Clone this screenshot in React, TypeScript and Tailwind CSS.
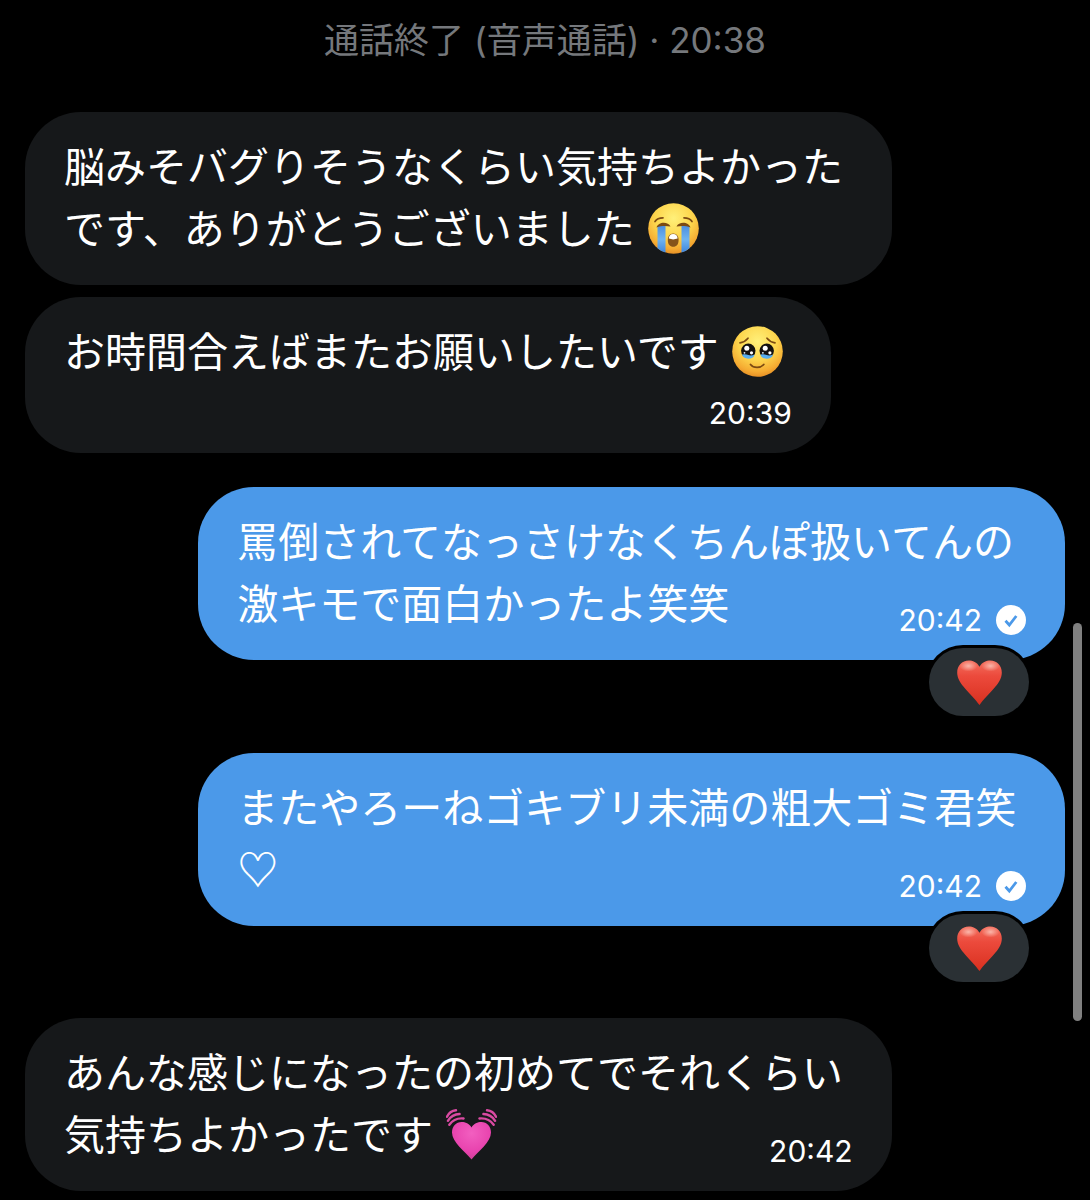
import React from 'react';
import clsx from 'clsx';

const emojiClass = "inline-block w-[51px] h-[51px] ml-[13px] mr-[9px] align-[-10px]";

const FaceDefs = ({ id }: { id: string }) => (
  <defs>
    <radialGradient id={id} cx="0.5" cy="0.3" r="0.75">
      <stop offset="0" stopColor="#fff07a" />
      <stop offset="0.5" stopColor="#fdd54c" />
      <stop offset="0.8" stopColor="#f5ab32" />
      <stop offset="1" stopColor="#e0831f" />
    </radialGradient>
    <linearGradient id={`${id}-tear`} x1="0" y1="0" x2="0" y2="1">
      <stop offset="0" stopColor="#4d8fe0" />
      <stop offset="0.5" stopColor="#6fb4f0" />
      <stop offset="1" stopColor="#3f86dd" />
    </linearGradient>
  </defs>
);

const SobbingFace = () => (
  <svg viewBox="0 0 51 51" role="img" aria-label="😭" className={emojiClass}>
    <FaceDefs id="sob" />
    <circle cx="25.5" cy="25.5" r="25.3" fill="url(#sob)" />
    <g fill="none" stroke="#7c4a12" strokeWidth="1.7" strokeLinecap="round">
      <path d="M7 18.5C8.5 16.2 11.5 14.8 15 14.8" />
      <path d="M44 18.5C42.5 16.2 39.5 14.8 36 14.8" />
    </g>
    <path d="M9.5 23V45.2Q13 48.5 17.5 49.5V23Z" fill="url(#sob-tear)" />
    <path d="M33.5 23V49.5Q38 48.5 41.5 45.2V23Z" fill="url(#sob-tear)" />
    <path d="M8.5 24.5C10 18.7 20 18 22.5 23.5C18 22.6 13 22.6 8.5 24.5Z" fill="#7c4a12" />
    <path d="M42.5 24.5C41 18.7 31 18 28.5 23.5C33 22.6 38 22.6 42.5 24.5Z" fill="#7c4a12" />
    <path d="M25.2 30.5C21.5 30.5 19.8 33.5 19.8 37C19.8 41.5 22 43.8 25.2 43.8C28.5 43.8 30.6 41.5 30.6 37C30.6 33.5 29 30.5 25.2 30.5Z" fill="#85531a" />
    <path d="M25.2 31C22.5 31 20.8 33 20.8 35.6Q25.2 37.2 29.6 35.6C29.6 33 28 31 25.2 31Z" fill="#fff" />
  </svg>
);

const PleadingFace = () => (
  <svg viewBox="0 0 51 51" role="img" aria-label="🥹" className={emojiClass}>
    <FaceDefs id="plead" />
    <circle cx="25.5" cy="25.5" r="25.3" fill="url(#plead)" />
    <g fill="none" stroke="#7c4a12" strokeWidth="1.7" strokeLinecap="round">
      <path d="M8 16.8C11.5 16.2 14 14.8 16 12.2" />
      <path d="M43 16.8C39.5 16.2 37 14.8 35 12.2" />
      <path d="M18.5 38.5C21.5 42.3 28.5 42.3 31.8 38.5" />
    </g>
    {[16.3, 34.7].map((cx) => (
      <g key={cx} transform={`translate(${cx} 24.8)`}>
        <circle r="7.2" fill="#14110f" />
        <path d="M-6.3 3.8Q-3 2.8 0 4.2Q3 5.2 6.3 3.6C5.6 6.6 3.2 7.9 0 7.9C-3.2 7.9 -5.6 6.6 -6.3 3.8Z" fill="#58aef0" />
        <circle cx="-1.5" cy="-2.5" r="2.5" fill="#fff" />
        <circle cx="3.2" cy="2" r="1.6" fill="#fff" />
        <circle cx="-3.8" cy="2" r="0.9" fill="#e6f3ff" />
      </g>
    ))}
  </svg>
);

const BeatingHeart = () => (
  <svg viewBox="0 0 51 51" role="img" aria-label="💓" className={emojiClass}>
    <defs>
      <radialGradient id="pink" cx="0.5" cy="0.3" r="0.7">
        <stop offset="0" stopColor="#f25fc0" />
        <stop offset="0.7" stopColor="#e843ae" />
        <stop offset="1" stopColor="#cf3f97" />
      </radialGradient>
    </defs>
    <path d="M25.5 18.5C27.8 14.5 31.6 13 35.3 13C41 13 45 17.5 45 23.5C45 33 32.5 42 25.5 50.5C18.5 42 6 33 6 23.5C6 17.5 10 13 15.7 13C19.4 13 23.2 14.5 25.5 18.5Z" fill="url(#pink)" />
    <g fill="none" stroke="#d94aa2" strokeWidth="2.4" strokeLinecap="round">
      <path d="M1 7.8C2.8 4 6 1.7 10 1.3" />
      <path d="M1.9 11.8C4.5 7.6 8.8 5.2 13.6 5" />
      <path d="M3.3 15.8C6.5 11.3 11.8 8.9 17.6 9.5" />
      <path d="M50 7.8C48.2 4 45 1.7 41 1.3" />
      <path d="M49.1 11.8C46.5 7.6 42.2 5.2 37.4 5" />
      <path d="M47.7 15.8C44.5 11.3 39.2 8.9 33.4 9.5" />
    </g>
  </svg>
);

const RedHeart = () => (
  <svg viewBox="0 0 45 45" role="img" aria-label="❤️" className="w-[45px] h-[45px]">
    <defs>
      <linearGradient id="red" x1="0" y1="0" x2="0" y2="1">
        <stop offset="0" stopColor="#f4705f" />
        <stop offset="0.35" stopColor="#ec4a3c" />
        <stop offset="1" stopColor="#d9301f" />
      </linearGradient>
      <radialGradient id="shine">
        <stop offset="0" stopColor="#ffd9cf" stopOpacity="0.7" />
        <stop offset="1" stopColor="#ffd9cf" stopOpacity="0" />
      </radialGradient>
    </defs>
    <path d="M22.5 6.8C25 2.2 29.3 0.5 33.3 0.5C40 0.5 44.8 5.5 44.8 12.7C44.8 24 30.5 33.5 22.5 45C14.5 33.5 0.2 24 0.2 12.7C0.2 5.5 5 0.5 11.7 0.5C15.7 0.5 20 2.2 22.5 6.8Z" fill="url(#red)" />
    <ellipse cx="11.5" cy="6" rx="9" ry="5.5" fill="url(#shine)" />
    <ellipse cx="33.5" cy="6" rx="9" ry="5.5" fill="url(#shine)" />
  </svg>
);

const ReadMark = () => (
  <svg viewBox="0 0 30 30" role="img" aria-label="既読" className="w-[30px] h-[30px]">
    <circle cx="15" cy="15" r="15" fill="#fff" />
    <path d="M9.5 15.8L13.3 20L20.3 11" fill="none" stroke="#4b99e9" strokeWidth="2.8" />
  </svg>
);

const Stamp = ({ time, sent }: { time: string; sent?: boolean }) => (
  <span className="flex items-center justify-end gap-3.5 text-[30px] leading-[30px]">
    <time>{time}</time>
    {sent && <ReadMark />}
  </span>
);

type BubbleProps = {
  children: React.ReactNode;
  time?: string;
  sent?: boolean;
  timeBelow?: boolean;
  liked?: boolean;
};

const Bubble = ({ children, time, sent, timeBelow, liked }: BubbleProps) => (
  <div
    className={clsx(
      "relative max-w-5/6 rounded-[56px] px-[39px] pt-6 pb-[25px] text-white",
      sent ? "self-end bg-[#4b99e9]" : "self-start bg-[#16181a]"
    )}
  >
    <p className="text-[41px] leading-[62px]">
      {children}
      {/* sits at the end of the last line */}
      {time && !timeBelow && (
        <span className="float-right mt-8">
          <Stamp time={time} sent={sent} />
        </span>
      )}
    </p>
    {time && timeBelow && (
      <div className="mt-[15px]">
        <Stamp time={time} sent={sent} />
      </div>
    )}
    {liked && (
      <button
        type="button"
        className="absolute right-9 -bottom-14 flex h-[68px] w-[100px] items-center justify-center rounded-full bg-[#2a3034] ring-3 ring-black"
      >
        <RedHeart />
      </button>
    )}
  </div>
);

export default function App() {
  return (
    <main
      lang="ja"
      className="relative min-h-screen bg-black px-[25px] pt-5 pb-2 font-['Inter','Noto_Sans_CJK_JP',sans-serif]"
    >
      <p className="mb-[52px] text-center text-[35px] leading-10 text-[#75787c]">
        通話終了 (音声通話) · 20:38
      </p>
      <div className="flex flex-col">
        <div className="flex flex-col gap-3">
          <Bubble>
            脳みそバグりそうなくらい気持ちよかったです、ありがとうございました
            <SobbingFace />
          </Bubble>
          <Bubble time="20:39" timeBelow>
            お時間合えばまたお願いしたいです
            <PleadingFace />
          </Bubble>
        </div>
        <div className="mt-[34px] mb-[92px] flex flex-col gap-[93px]">
          <Bubble sent time="20:42" liked>
            罵倒されてなっさけなくちんぽ扱いてんの激キモで面白かったよ笑笑
          </Bubble>
          <Bubble sent time="20:42" liked>
            またやろーねゴキブリ未満の粗大ゴミ君笑
            <span className="font-['Noto_Sans_CJK_JP',sans-serif] leading-none font-bold">♡</span>
          </Bubble>
        </div>
        <Bubble time="20:42">
          あんな感じになったの初めてでそれくらい気持ちよかったです
          <BeatingHeart />
        </Bubble>
      </div>
      {/* scroll thumb */}
      <div className="absolute right-2 top-[623px] h-[398px] w-[9px] rounded-full bg-[#808080]" />
    </main>
  );
}
